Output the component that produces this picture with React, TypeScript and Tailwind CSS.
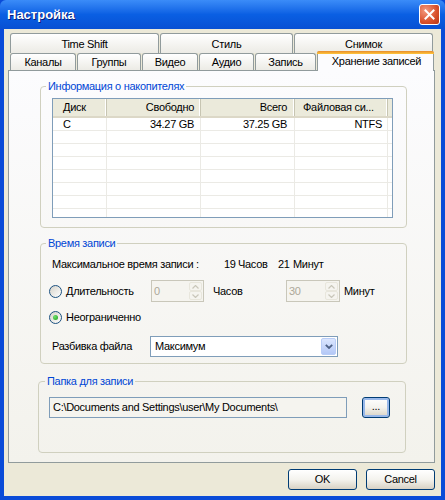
import React from "react";

const Radio = ({ checked }: { checked?: boolean }) => (
  <span className="w-[13px] h-[13px] shrink-0 rounded-full border border-[#1c5180] bg-gradient-to-br from-[#d6d3ca] to-white flex items-center justify-center">
    {checked && <span className="w-[5px] h-[5px] rounded-full bg-[radial-gradient(circle_at_35%_35%,#6fe06b,#1d9e1d)]" />}
  </span>
);

const SpinArrow = ({ up }: { up?: boolean }) => (
  <svg width="7" height="4" viewBox="0 0 7 4">
    <path d={up ? "M0.5 3.5 L3.5 0.5 L6.5 3.5" : "M0.5 0.5 L3.5 3.5 L6.5 0.5"} fill="none" stroke="#c9c7ba" strokeWidth="1.2" />
  </svg>
);

const Spin = ({ value, w }: { value: string; w: string }) => (
  <div className={`${w} h-[22px] shrink-0 border border-[#c9c7ba] bg-[#f5f4ef] flex items-stretch`}>
    <span className="flex-1 pl-[2px] leading-[20px] text-[#aca899]">{value}</span>
    <div className="w-[15px] flex flex-col p-[1px] gap-0">
      <div className="flex-1 rounded-[2px] border border-[#e8e6dc] bg-[#f5f4ef] flex items-center justify-center">
        <SpinArrow up />
      </div>
      <div className="flex-1 rounded-[2px] border border-[#e8e6dc] bg-[#f5f4ef] flex items-center justify-center">
        <SpinArrow />
      </div>
    </div>
  </div>
);

const XpButton = ({ children, w, focused }: { children: React.ReactNode; w: string; focused?: boolean }) => (
  <div className={`${w} h-[21px] rounded-[3px] border border-[#003c74] bg-gradient-to-b from-white via-[#f4f3ee] to-[#d8d2c4] flex items-center justify-center ${focused ? "shadow-[inset_0_0_0_2px_#98b8ea]" : ""}`}>
    {children}
  </div>
);

const rows = [
  ["C", "34.27 GB", "37.25 GB", "NTFS"],
  ["", "", "", ""],
  ["", "", "", ""],
  ["", "", "", ""],
  ["", "", "", ""],
  ["", "", "", ""],
  ["", "", "", ""],
  ["", "", "", ""],
];

const cols = [
  { w: "w-[54px]", align: "justify-start pl-[10px]" },
  { w: "w-[94px]", align: "justify-end pr-[6px]" },
  { w: "w-[94px]", align: "justify-end pr-[7px]" },
  { w: "w-[93px]", align: "justify-end pr-[5px]" },
];

const headers = [
  { t: "Диск", w: "w-[54px]", align: "justify-start pl-[10px]" },
  { t: "Свободно", w: "w-[94px]", align: "justify-end pr-[6px]" },
  { t: "Всего", w: "w-[94px]", align: "justify-end pr-[7px]" },
  { t: "Файловая си...", w: "w-[93px]", align: "justify-start pl-[8px]" },
];

export default function App() {
  return (
    <div className="w-[445px] h-[500px] bg-[#0a4bd8] flex flex-col font-['Tahoma','Liberation_Sans',Arial,sans-serif] text-[11px] leading-[13px] tracking-[-0.3px] text-black">
      {/* Title bar */}
      <div className="h-[29px] shrink-0 bg-gradient-to-b from-[#3b8cf8] via-[#0a5fe3] to-[#0850d3] flex items-center justify-between pl-[7px] pr-[5px] rounded-t-[6px]">
        <span className="text-white font-bold text-[13px] tracking-normal [text-shadow:1px_1px_#0a1c7a]">Настройка</span>
        <div className="w-[21px] h-[21px] rounded-[3px] border border-white bg-[radial-gradient(circle_at_30%_30%,#f49a7e,#d8502b_60%,#b83616)] flex items-center justify-center">
          <svg width="11" height="11" viewBox="0 0 11 11">
            <path d="M1.5 1.5 L9.5 9.5 M9.5 1.5 L1.5 9.5" stroke="white" strokeWidth="2" strokeLinecap="square" />
          </svg>
        </div>
      </div>

      {/* Client */}
      <div className="flex-1 mx-[4px] mb-[4px] bg-[#ece9d8] flex flex-col pl-[4px] pr-[6px] pt-[4px]">
        {/* Tabs */}
        <div className="flex flex-col pl-[2px]">
          <div className="h-[20px] flex gap-[1px]">
            {[
              ["Time Shift", "w-[149px]"],
              ["Стиль", "w-[133px]"],
              ["Снимок", "w-[139px]"],
            ].map(([t, w]) => (
              <div key={t} className={`${w} h-[20px] border border-b-0 border-[#919b9c] rounded-t-[3px] bg-gradient-to-b from-white to-[#ecebe5] flex items-center justify-center pt-[1px]`}>
                {t}
              </div>
            ))}
          </div>
          <div className="h-[17px] flex items-start gap-[1px]">
            {[
              ["Каналы", "w-[66px]"],
              ["Группы", "w-[64px]"],
              ["Видео", "w-[56px]"],
              ["Аудио", "w-[55px]"],
              ["Запись", "w-[61px]"],
            ].map(([t, w]) => (
              <div key={t} className={`${w} h-[17px] border border-b-0 border-[#919b9c] rounded-t-[3px] bg-gradient-to-b from-white to-[#ecebe5] flex items-center justify-center`}>
                {t}
              </div>
            ))}
            <div className="w-[117px] h-[20px] -mt-[2px] relative z-10 border-x border-[#919b9c] rounded-t-[3px] bg-[#fcfcfe] flex flex-col">
              <div className="h-[3px] rounded-t-[2px] bg-gradient-to-b from-[#e68b2c] to-[#ffc73c] -mx-[1px]" />
              <div className="flex-1 flex items-center justify-center pb-[2px] pl-[2px]">Хранение записей</div>
            </div>
          </div>
        </div>

        {/* Panel */}
        <div className="h-[393px] border border-[#919b9c] bg-gradient-to-b from-[#fcfcfe] to-[#f3f2ec] flex flex-col pl-[31px]">
          {/* Group 1 */}
          <fieldset className="mt-[9px] w-[367px] h-[148px] border border-[#d0d0bf] rounded-[4px]">
            <legend className="ml-[5px] px-[2px] text-[#0046d5] leading-[13px]">Информация о накопителях</legend>
            <div className="pl-[11px] pt-[5px]">
              <div className="w-[341px] h-[120px] border border-[#7f9db9] bg-white overflow-hidden flex flex-col">
                <div className="h-[19px] shrink-0 flex bg-[#ebeadb] border-b-[2px] border-[#dcd8c7]">
                  {headers.map((h) => (
                    <div key={h.t} className={`${h.w} h-full flex items-center ${h.align} border-r border-[#c7c5b2] shadow-[inset_-1px_0_0_#fff]`}>
                      <span className="whitespace-nowrap">{h.t}</span>
                    </div>
                  ))}
                  <div className="flex-1" />
                </div>
                {rows.map((r, i) => (
                  <div key={i} className="h-[13px] shrink-0 flex border-b border-[#ebeae5]">
                    {r.map((c, j) => (
                      <div key={j} className={`${cols[j].w} h-full flex items-center ${cols[j].align} border-r border-[#ebeae5] whitespace-nowrap`}>
                        {c}
                      </div>
                    ))}
                    <div className="flex-1" />
                  </div>
                ))}
              </div>
            </div>
          </fieldset>

          {/* Group 2 */}
          <fieldset className="mt-[9px] w-[367px] h-[127px] border border-[#d0d0bf] rounded-[4px]">
            <legend className="ml-[5px] px-[2px] text-[#0046d5] leading-[13px]">Время записи</legend>
            <div className="flex flex-col">
              <div className="mt-[8px] pl-[11px] flex h-[13px] items-center whitespace-nowrap">
                <span className="w-[172px]">Максимальное время записи :</span>
                <span className="w-[14px]">19</span>
                <span className="w-[40px]">Часов</span>
                <span className="w-[15px]">21</span>
                <span>Минут</span>
              </div>
              <div className="mt-[9px] pl-[8px] flex h-[22px] items-center">
                <div className="w-[102px] flex items-center gap-[4px]">
                  <Radio />
                  <span>Длительность</span>
                </div>
                <Spin value="0" w="w-[53px]" />
                <span className="ml-[9px] w-[73px]">Часов</span>
                <Spin value="30" w="w-[54px]" />
                <span className="ml-[4px]">Минут</span>
              </div>
              <div className="mt-[9px] pl-[8px] flex h-[13px] items-center gap-[4px]">
                <Radio checked />
                <span>Неограниченно</span>
              </div>
              <div className="mt-[12px] pl-[11px] flex h-[21px] items-center">
                <span className="w-[98px]">Разбивка файла</span>
                <div className="w-[188px] h-[21px] border border-[#7f9db9] bg-white flex items-stretch p-[1px]">
                  <span className="flex-1 pl-[3px] leading-[17px]">Максимум</span>
                  <div className="w-[15px] rounded-[2px] border border-[#b9cdf7] bg-gradient-to-b from-[#dbe6fe] to-[#b4c8f6] flex items-center justify-center">
                    <svg width="8" height="5" viewBox="0 0 8 5">
                      <path d="M0.8 0.8 L4 4 L7.2 0.8" fill="none" stroke="#4d6185" strokeWidth="1.8" />
                    </svg>
                  </div>
                </div>
              </div>
            </div>
          </fieldset>

          {/* Group 3 */}
          <fieldset className="mt-[11px] -ml-[2px] w-[368px] h-[78px] border border-[#d0d0bf] rounded-[4px]">
            <legend className="ml-[6px] px-[2px] text-[#0046d5] leading-[13px]">Папка для записи</legend>
            <div className="mt-[9px] pl-[10px] flex items-center">
              <div className="w-[298px] h-[21px] border border-[#7f9db9] bg-[#f5f4ef] flex items-center pl-[3px] whitespace-nowrap">
                C:\Documents and Settings\user\My Documents\
              </div>
              <div className="ml-[15px]">
                <XpButton w="w-[28px]" focused>
                  <span className="-mt-[3px] leading-[11px]">...</span>
                </XpButton>
              </div>
            </div>
          </fieldset>
        </div>

        {/* Buttons */}
        <div className="mt-[6px] flex justify-end gap-[9px]">
          <XpButton w="w-[69px]">OK</XpButton>
          <XpButton w="w-[69px]">Cancel</XpButton>
        </div>
      </div>
    </div>
  );
}
